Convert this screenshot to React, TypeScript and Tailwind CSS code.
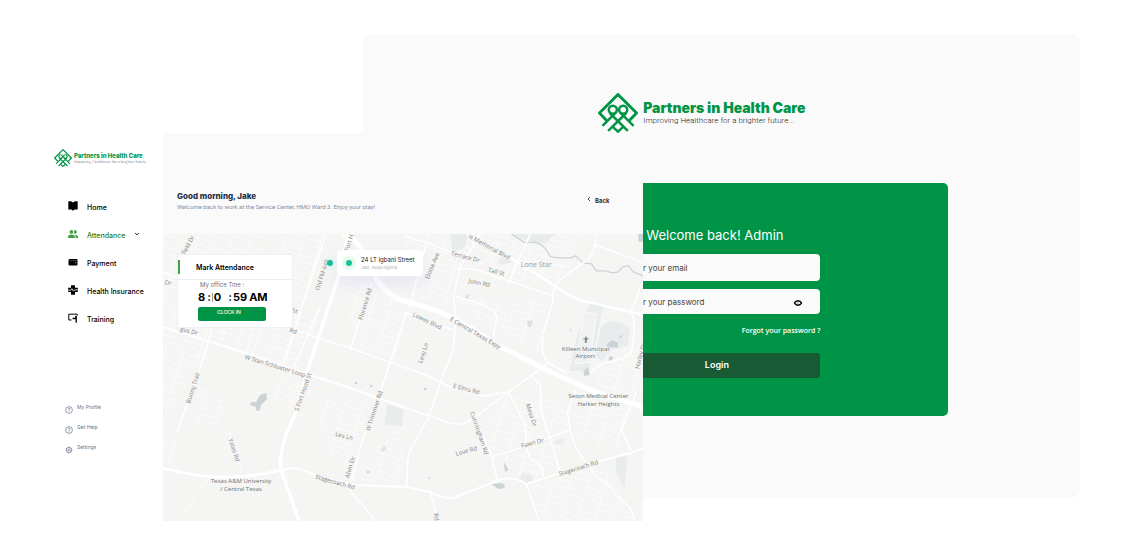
import React from "react";

function LogoMark({ className }: { className: string }) {
  return (
    <svg viewBox="0.7 0.7 38.6 38.6" className={className} fill="none" stroke="#009546" strokeWidth="2.8" aria-hidden="true">
      <path d="M9 27.3 2.1 20 20 2.1 37.9 20 31 27.3" strokeLinejoin="round" />
      <g strokeWidth="2.4">
        <circle cx="15" cy="16.800" r="3.900" />
        <circle cx="25" cy="16.800" r="3.900" />
        <path d="M12 20 29.500 37.200M18 19.500 5 32.400" />
        <path d="M28 20 10.500 37.200M22 19.500 35 32.400" />
        <path d="m15 33.400 5 4.600 5-4.600" />
      </g>
    </svg>
  );
}

const navIcons: Record<string, React.ReactNode> = {
  Home: (
    <path d="M.3.4C2 0 3.800.4 5 1.500 6.200.4 8 0 9.700.4V8.400H6.600L5 9.800 3.400 8.400H.3Z" fill="#000" />
  ),
  Attendance: (
    <g fill="#43a047">
      <circle cx="3.4" cy="2.9" r="1.9" />
      <path d="M0 9V7.8C0 6.4 1.8 5.6 3.4 5.6s3.4.8 3.4 2.2V9Z" />
      <path d="M5.9 1.3a1.9 1.9 0 1 1 0 3.2c.5-.9.5-2.200 0-3.200ZM7.600 9V7.800c0-.8-.3-1.400-.9-2C8.400 5.800 10 6.500 10 7.800V9Z" />
    </g>
  ),
  Payment: (
    <g>
      <rect x=".5" y="2" width="9" height="6.400" rx="1" fill="#000" />
      <path d="M.5 3.600h9" stroke="#777" strokeWidth=".5" />
      <circle cx="7.700" cy="5.800" r=".5" fill="#ddd" />
    </g>
  ),
  "Health Insurance": (
    <g>
      <path d="M3 .3h4v2.500h2.800v4.200H7v2.700H3V7H.2V2.800H3Z" fill="#000" />
      <path d="M.2 5.200h2.700l1-1.500 1.600 2.500 1-1.300h3.300" stroke="#fff" strokeWidth=".8" fill="none" />
    </g>
  ),
  Training: (
    <g fill="none" stroke="#000" strokeWidth="1">
      <path d="M3.500 7H.800V1.200H9.200V2.800" />
      <circle cx="8" cy="4" r=".7" fill="#000" />
      <path d="M4.600 5.500h3.600V9.700" strokeWidth="1.300" />
    </g>
  ),
};

function Sidebar() {
  return (
    <aside className="flex w-[163px] shrink-0 flex-col">
      <div className="ml-[54px] mt-4 flex items-center gap-[2px]">
        <LogoMark className="h-[18px] w-[18px]" />
        <div className="whitespace-nowrap">
          <div className="text-[6px] font-extrabold leading-[7px] text-[#009546]">Partners in Health Care</div>
          <div className="font-['Lato'] text-[4px] font-light leading-[5px] text-[#444]">
            Improving Healthcare for a brighter future...
          </div>
        </div>
      </div>
      <nav className="ml-[68px] mt-[27px] flex flex-col">
        {Object.keys(navIcons).map((name) => (
          <a
            key={name}
            href={"#" + name}
            className={
              "flex h-7 items-center whitespace-nowrap text-[7px] font-medium " +
              (name === "Attendance" ? "text-[#2e7d1e]" : "text-black")
            }
          >
            <svg viewBox="0 0 10 10" className="mb-1 mr-[9px] h-[10px] w-[10px]" aria-hidden="true">
              {navIcons[name]}
            </svg>
            {name}
            {name === "Attendance" && (
              <svg viewBox="0 0 6 6" className="mb-1 ml-[9px] h-[6px] w-[6px]" fill="none" stroke="#333" aria-hidden="true">
                <path d="m1 2 2 1.800L5 2" />
              </svg>
            )}
          </a>
        ))}
      </nav>
      <div className="ml-[65px] mt-16 flex flex-col text-[5px] text-[#69738c]">
        {["My Profile", "Get Help", "Settings"].map((name) => (
          <a key={name} href={"#" + name} className="flex h-5 items-center gap-1">
            <svg viewBox="0 0 8 8" className="mt-1 h-2 w-2" fill="none" stroke="#69738c" strokeWidth=".7" aria-hidden="true">
              {name === "Settings" ? (
                <>
                  <circle cx="4" cy="4" r="2.700" strokeWidth="1.100" strokeDasharray="1.300 .5" />
                  <circle cx="4" cy="4" r="1.100" />
                </>
              ) : (
                <>
                  <circle cx="4" cy="4" r="3.400" />
                  <path d="M3 3.200c0-1.400 2.100-1.200 2 0C5 4 4 3.900 4 4.800M4 5.400v.7" />
                </>
              )}
            </svg>
            <span>{name}</span>
          </a>
        ))}
      </div>
    </aside>
  );
}

type Label = [string, number, number, number];

const labels: Label[] = [
  ["Fort H", 186, 9, -72],
  ["Old FM 440", 159, 41, -72],
  ["Florence Rd", 202, 70, -73],
  ["field Dr", 25, 11, -62],
  ["Dr", 5, 49, 15],
  ["gus Dr", 26, 97, 14],
  ["St", 132, 77, 10],
  ["Rd", 130, 97, 22],
  ["W Stan Schlueter Loop", 112, 132, 17],
  ["Bunny Trail", 30, 154, -72],
  ["S Fort Hood St", 140, 158, -71],
  ["W Trimmier Rd", 211, 177, -72],
  ["Les Ln", 181, 202, 14],
  ["Yates Rd", 71, 216, 72],
  ["Alvin Dr", 187, 233, -73],
  ["Stagecoach Rd", 172, 248, 16],
  ["is Memorial Blvd", 326, 13, 29],
  ["Terrace Dr", 302, 23, 15],
  ["Tall St", 333, 38, 14],
  ["John Rd", 316, 49, 12],
  ["Eloise Ave", 269, 32, -67],
  ["Lowes Blvd", 264, 87, 26],
  ["Levy Ln", 260, 119, -72],
  ["E Central Texas Expy", 312, 99, 30],
  ["E Elms Rd", 303, 155, 15],
  ["Mesa Dr", 368, 181, 72],
  ["Cunningham Rd", 316, 199, 71],
  ["Love Rd", 303, 217, -16],
  ["Fawn Dr", 369, 209, -15],
  ["Stagecoach Rd", 415, 234, -17],
  ["Rd", 273, 283, 80],
  ["Harley Dr", 477, 122, -75],
];

const minorRoads = [
  "M35 141 14 198M45 108 35 141M52 83 45 108",
  "M208 49 187 116M157 73 127 141M163 0 120 130",
  "M0 39 60 58 130 96 187 114 240 133 263 141 287 153 320 162 345 158",
  "M223 141 200 204 187 251C186 262 200 268 212 287M243 79 223 141",
  "M317 0 297 33 290 63Q294 86 290 116L280 141 265 184 248 214Q243 222 244 253",
  "M432 0Q434 20 420 29T393 49Q387 66 390 66L380 99Q376 124 387 130L403 139",
  "M432 11 473 26Q480 30 480 36M480 46 468 76Q474 98 467 119C458 130 440 123 427 139",
  "M263 9 320 30M263 9 247 74M240 2 263 9M295 36Q304 33 313 36L390 62M367 0 345 49",
  "M290 62 315 69Q336 77 333 86L330 103M240 78 267 88 290 96",
  "M310 181 327 218 334 246M328 223 357 214 407 196M345 158 362 191 363 212Q365 225 373 229T380 243",
  "M368 141 377 151 378 178 397 238M412 156 404 179 407 196Q410 215 427 234C436 250 444 246 450 257S470 270 471 287",
  "M473 158 458 196 467 216M363 250 376 287M267 258 275 287",
  "M240 173 287 189Q300 193 310 184L345 158 387 128",
];

const blocks = [
  "M0 0 100 0 90 60 60 110 40 135 0 120Z",
  "M60 60 155 85 135 135 60 112Z",
  "M115 0 160 0 140 70 100 60Z",
  "M180 40 240 66 240 130 190 110Z",
  "M240 0 310 0 285 70 240 60Z",
  "M290 66 385 64 378 120 330 98Z",
  "M300 0 420 0 395 45 345 48Z",
  "M440 132 480 110 480 168 432 150Z",
  "M346 160 400 165 405 195 330 220 318 190Z",
  "M150 160 205 165 190 240 158 215Z",
  "M0 120 30 130 12 180 0 175Z",
  "M36 150 64 165 56 195 32 190Z",
  "M335 225 395 205 395 235 365 248Z",
  "M368 252 440 230 470 285 380 287Z",
  "M412 160 470 178 455 215 410 205Z",
  "M115 142 140 150 130 180 110 165Z",
  "M0 195 15 205 8 230 0 230Z",
  "M210 220 240 190 240 248 195 248Z",
];

function StreetMap() {
  return (
    <svg
      viewBox="0 0 480 287"
      preserveAspectRatio="xMidYMid slice"
      className="block h-full w-full"
      role="img"
      aria-label="Street map"
    >
      <defs>
        <pattern id="streets" width="17" height="6" patternUnits="userSpaceOnUse" patternTransform="rotate(16)">
          <path d="M0 .5H17M.5 0V6" stroke="#fcfcfc" strokeWidth=".7" fill="none" />
        </pattern>
      </defs>
      <rect width="480" height="287" fill="#f5f5f4" />
      {blocks.map((d) => (
        <path key={d} d={d} fill="url(#streets)" />
      ))}
      <g fill="#e9ecec">
        <path d="M287 0h18l-4 14-12 4ZM348 0h45l-12 10-17-3ZM334 28l8-8 8 8-12 3Z" />
        <path d="M427 68 440 70 432 110 424 137 406 137 413 104Z" />
        <path d="M438 92C448 84 462 88 467 96L464 112 448 116 438 127 432 122Z" />
        <path d="m224 171 16 4-1 18-18-3ZM359 238l10 4 1 6-11 2-3-5ZM452 224l12-3-3 34-8-16ZM391 207l8-3 2 5-9 2Z" />
      </g>
      <path d="M421 78 433 80 427 128 412 130Z" fill="#f0f1f1" stroke="#fafafa" />
      <g fill="#ccd3d4">
        <path d="m97 161 6-2 1 6-6 6-1 5-4 1 0-4-6-2 1-3 5 0Z" />
        <path d="m443 110 6-4 6 3-1 5-6-1-3 2ZM446 122l4 1-2 4-3-1ZM460 101l-4 4 0-3ZM420 137l5-4 1 8-5 1ZM475 0h5v8h-5Z" />
        <path d="M328 250l10-1q5 2 3 5l-6 1ZM341 228l4 8-3 2-1-4Z" />
        <path d="m218 214 4-2 1 4-4 2ZM364 86l6 1-3 7-3-2ZM303 60l3 1-1 4-3-1ZM406 94l2 1 0 3-2-1Z" opacity=".6" />
        <circle cx="193" cy="149" r="1.300" />
        <circle cx="208" cy="152" r="1.200" />
        <circle cx="262" cy="155" r="1.200" />
        <circle cx="205" cy="238" r="1.300" />
        <circle cx="266" cy="244" r="1" />
      </g>
      <path
        d="m348 0 6 4 8 5 9-1 7 3 5 5 4 7 9 1 11 0 5-2 8 7 8 1 5 7 9 0 7 2 6-1 4-5 6-1 5 6 10 4"
        fill="none"
        stroke="#ccd4d5"
        strokeWidth="1.300"
      />
      <g fill="none" stroke="#fff" strokeLinejoin="round">
        <path d="M46 244 16 287M66 197 79 238M132 96 160 0M90 90 84 118M407 33 352 26" strokeWidth=".8" />
        {minorRoads.map((d) => (
          <path key={d} d={d} strokeWidth="1.500" />
        ))}
        <path d="M0 93 67 114 147 141 187 154 240 173" strokeWidth="2" />
        <path d="M303 0 350 26 390 51Q402 61 420 67L467 78 480 81" strokeWidth="2.300" />
        <path d="M118 237Q128 232 139 236L167 246 193 251 244 253 267 258Q283 266 292 263L333 247Q350 240 363 250L400 238 440 226 467 219 480 214" strokeWidth="2" />
        <path d="M0 234Q38 244 66 243T118 236" strokeWidth="2.800" />
        <path d="M185 0 175 44 143 141 133 178Q114 216 118 236L136 287" strokeWidth="3.500" />
        <path d="M178 0Q194 4 202 22C213 48 219 59 240 67C268 74 290 80 330 109L387 138 427 156 480 173" strokeWidth="5" />
      </g>
      <g
        fontFamily="'Open Sans', sans-serif"
        fontSize="6"
        fill="#858585"
        textAnchor="middle"
        stroke="#f5f5f4"
        strokeWidth="1"
        paintOrder="stroke"
      >
        {labels.map(([text, x, y, angle]) => (
          <text key={text + x} x={x} y={y + 2} transform={`rotate(${angle} ${x} ${y})`}>
            {text}
          </text>
        ))}
        <text x="373" y="33" fontSize="7" fill="#a3a3a3">Lone Star</text>
        <g fill="#6f6f6f">
          <text x="422" y="117">Killeen Municipal</text>
          <text x="422" y="124">Airport</text>
          <text x="435" y="164">Seton Medical Center</text>
          <text x="435" y="172">Harker Heights</text>
          <text x="78" y="249">Texas A&amp;M University</text>
          <text x="78" y="257">/ Central Texas</text>
        </g>
      </g>
      <path d="M422.500 102.500v6M420 105h5M421.300 108h2.400" stroke="#666" strokeWidth="1.100" />
    </svg>
  );
}

function AttendanceCard() {
  return (
    <section className="absolute left-[14px] top-5 h-[74px] w-[116px] border border-[#eef0f4] bg-white">
      <div className="flex h-[25px] items-center border-b border-[#eceef5]">
        <span className="h-[14px] w-[2px] bg-[#43a047]" />
        <h2 className="ml-4 mt-[3px] text-[7px] font-semibold text-black">Mark Attendance</h2>
      </div>
      <div className="ml-5 w-[76px]">
        <p className="pl-[2px] text-[6px] leading-[9px] text-[#687083]">My office Tme :</p>
        <p className="flex h-[17px] items-center whitespace-nowrap text-[11px] font-bold leading-[17px] text-black">
          <span>8</span>
          <span className="ml-[2px]">:</span>
          <span className="ml-px h-[9px] w-px shrink-0 bg-[#999]" />
          <span className="ml-px">0</span>
          <span className="ml-[7px]">:</span>
          <span className="ml-px">59</span>
          <span className="ml-[2px]">AM</span>
        </p>
        <button className="mt-px block h-[14px] w-[68px] rounded-[2px] bg-[#009546] pb-[2px] pr-[6px] text-[5px] font-medium text-white">
          CLOCK IN
        </button>
      </div>
    </section>
  );
}

function AttendanceWindow() {
  return (
    <div className="z-10 col-start-1 row-start-1 mt-[133px] flex w-[57.400%] self-start">
      <Sidebar />
      <main className="min-w-0 flex-1 bg-[#fafafa]">
        <header className="flex h-[101px] items-end justify-between pb-[22px] pl-[14px] pr-[34px]">
          <div className="whitespace-nowrap">
            <h1 className="text-[8px] font-extrabold leading-[12px] text-[#242e49]">Good morning, Jake</h1>
            <p className="font-['Roboto'] text-[6px] leading-[10px] text-[#858fa3]">
              Welcome back to work at the Service Center, HMO Ward 3. Enjoy your stay!
            </p>
          </div>
          <button className="mb-[5px] flex items-center gap-1 text-[6px] font-bold leading-[12px] text-[#333]">
            <svg viewBox="0 0 4 6" className="mb-1 h-[6px] w-1" fill="none" stroke="#333" strokeWidth=".9" aria-hidden="true">
              <path d="M3 1 1 3l2 2" />
            </svg>
            Back
          </button>
        </header>
        <div className="relative h-[287px] overflow-hidden">
          <StreetMap />
          <AttendanceCard />
          <span className="absolute left-[164px] top-[26px] h-[6px] w-[6px] rounded-full bg-[#16c098] shadow-[0_0_5px_#bdeedd]" />
          <div className="absolute left-[174px] top-4 flex h-[26px] w-[86px] items-center gap-[5px] whitespace-nowrap rounded-[4px] bg-white pl-[5px] shadow-[0_8px_16px_rgba(120,130,240,0.12)]">
            <span className="flex h-[14px] w-[14px] items-center justify-center rounded-full bg-[#e5faed]">
              <span className="h-[6px] w-[6px] rounded-full bg-[#16c098]" />
            </span>
            <div>
              <div className="text-[6px] leading-[8px] text-[#222]">24 LT Igbani Street</div>
              <div className="text-[4px] leading-[7px] text-[#b0b0b0]">Jabi, Abuja Nigeria,</div>
            </div>
          </div>
        </div>
      </main>
    </div>
  );
}

function LoginWindow() {
  return (
    <div className="col-start-1 row-start-1 ml-[32.400%] mr-[3.700%] mt-[34px] flex flex-col items-center self-start rounded-[9px] bg-[#fafafa] pb-[82px] pr-[9px] pt-[59px]">
      <div className="mr-[30px] flex items-center gap-[5px]">
        <LogoMark className="h-10 w-10" />
        <div className="whitespace-nowrap pb-[2px]">
          <div className="text-[14px] font-black leading-[17px] text-[#009546]">Partners in Health Care</div>
          <div className="font-['Roboto'] text-[8px] font-light leading-[10px] text-[#222]">
            Improving Healthcare for a brighter future...
          </div>
        </div>
      </div>
      <form
        className="mt-[50px] flex w-[463px] max-w-full flex-col items-center rounded-[5px] bg-[#009546] pb-[38px] pt-[42px]"
        onSubmit={(e) => e.preventDefault()}
      >
        <h2 className="pr-1 text-[13px] leading-5 text-white">Welcome back! Admin</h2>
        <div className="mt-[9px] flex w-[207px] flex-col">
          <input
            type="email"
            aria-label="Email"
            placeholder="Enter your email"
            className="h-[27px] w-full rounded-[4px] bg-[#fafafa] px-[13px] pt-px text-[8px] text-[#333] placeholder:text-[#444]"
          />
          <div className="mt-2 flex h-[25px] items-center rounded-[4px] bg-[#fafafa] pl-[13px] pr-[17px]">
            <input
              type="password"
              aria-label="Password"
              placeholder="Enter your password"
              className="min-w-0 flex-1 bg-transparent text-[8px] text-[#333] placeholder:text-[#444]"
            />
            <button type="button" aria-label="Show password">
              <svg viewBox="0 0 10 8" className="mt-[2px] block h-2 w-[10px]" aria-hidden="true">
                <path d="M1.500 4c1.500-2.900 5.500-2.900 7 0-1.500 2.900-5.500 2.900-7 0Z" fill="#fff" stroke="#000" strokeWidth="1.500" />
                <circle cx="5" cy="4" r=".8" fill="#000" opacity=".5" />
              </svg>
            </button>
          </div>
          <a href="#forgot" className="mt-3 self-end font-['Open_Sans'] text-[7px] font-semibold leading-[10px] text-white">
            Forgot your password ?
          </a>
          <button className="mt-[17px] h-[25px] w-full rounded-[3px] bg-[#175a34] pb-[2px] text-[9px] font-semibold text-white">
            Login
          </button>
        </div>
      </form>
    </div>
  );
}

export default function App() {
  return (
    <div className="grid min-h-screen grid-cols-1 bg-white font-['Inter',sans-serif]">
      <LoginWindow />
      <AttendanceWindow />
    </div>
  );
}
